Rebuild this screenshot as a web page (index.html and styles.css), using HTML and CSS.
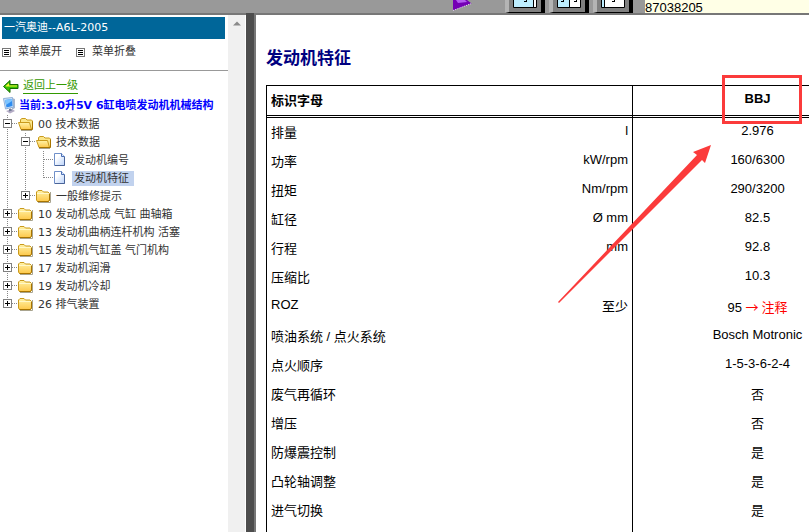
FILE: index.html
```html
<!DOCTYPE html>
<html lang="zh-CN">
<head>
    <meta charset="UTF-8">
    <meta name="viewport" content="width=device-width, initial-scale=1.0">
    <title>一汽奥迪--A6L-2005</title>
    <link rel="stylesheet" href="styles.css">
</head>
<body>

<!-- shared icons -->
<svg class="sprite" aria-hidden="true">
    <defs>
        <linearGradient id="gold" x1="0" y1="0" x2="0" y2="1">
            <stop offset="0" stop-color="#fff3a8"/>
            <stop offset="1" stop-color="#fdc84a"/>
        </linearGradient>
        <linearGradient id="paper" x1="0" y1="0" x2="1" y2="1">
            <stop offset="0.3" stop-color="#ffffff"/>
            <stop offset="1" stop-color="#b9d2fa"/>
        </linearGradient>
    </defs>
    <symbol id="plus" viewBox="0 0 18 18">
        <path d="M7.5 0V18M12 8.500H18" stroke="#888" stroke-dasharray="1 1"/>
        <rect x="3.500" y="4.500" width="8" height="8" fill="#fff" stroke="#808080"/>
        <path d="M5 8.500H10M7.500 6V11" stroke="#000"/>
    </symbol>
    <symbol id="plus-last" viewBox="0 0 18 18">
        <path d="M7.500 0V5M12 8.500H18" stroke="#888" stroke-dasharray="1 1"/>
        <rect x="3.500" y="4.500" width="8" height="8" fill="#fff" stroke="#808080"/>
        <path d="M5 8.500H10M7.500 6V11" stroke="#000"/>
    </symbol>
    <symbol id="minus" viewBox="0 0 18 18">
        <path d="M7.500 0V18M12 8.500H18" stroke="#888" stroke-dasharray="1 1"/>
        <rect x="3.500" y="4.500" width="8" height="8" fill="#fff" stroke="#808080"/>
        <path d="M5 8.500H10" stroke="#000"/>
    </symbol>
    <symbol id="line" viewBox="0 0 18 18">
        <path d="M7.500 0V18" stroke="#888" stroke-dasharray="1 1"/>
    </symbol>
    <symbol id="join" viewBox="0 0 18 18">
        <path d="M7.500 0V18M8 8.500H18" stroke="#888" stroke-dasharray="1 1"/>
    </symbol>
    <symbol id="corner" viewBox="0 0 18 18">
        <path d="M7.500 0V9M8 8.500H18" stroke="#888" stroke-dasharray="1 1"/>
    </symbol>
    <symbol id="folder" viewBox="0 0 18 18">
        <path d="M2 15.500H14.500V5" fill="none" stroke="#a9a48f"/>
        <path d="M.5 13V5L2 3.500H6L7.500 5H12L13.500 6.500V13L12.500 14.500H1.500Z" fill="url(#gold)" stroke="#c99a1c"/>
        <path d="M1 6.500H13" stroke="#fff8c8"/>
        <path d="M1.500 14.500H12.500L13.500 13V7" fill="none" stroke="#a87400"/>
    </symbol>
    <symbol id="folder-open" viewBox="0 0 18 18">
        <path d="M3 15.500H14" stroke="#a9a48f"/>
        <path d="M2.500 13V4.500L4 3.500H7.500L9 5H13.500L14.500 6V14H3.500Z" fill="#fbe68a" stroke="#c99a1c"/>
        <path d="M.5 7.500H11.500L13.500 14.500H3Z" fill="url(#gold)" stroke="#c99a1c"/>
        <path d="M3 14.500H14.500V6.500" fill="none" stroke="#a87400"/>
    </symbol>
    <symbol id="page" viewBox="0 0 18 18">
        <path d="M.5 2.500H7.500L10.500 5.500V14.500H.5Z" fill="url(#paper)" stroke="#6f8fc9"/>
        <path d="M7.500 2.500V5.500H10.500" fill="#dce8fc" stroke="#4a6fb5"/>
        <path d="M1 14.500H10.500V6" fill="none" stroke="#4a6498"/>
    </symbol>
    <symbol id="list" viewBox="0 0 9 9">
        <rect x=".5" y=".5" width="8" height="8" fill="#fff" stroke="#777"/>
        <path d="M2 2.500H7M2 4.500H7M2 6.500H7" stroke="#000"/>
    </symbol>
</svg>

<header class="toolbar">
    <button type="button" class="play" aria-label="播放">
        <svg width="19" height="13" viewBox="0 0 19 13">
            <path d="M0 0H14L18.500 3.500L0 10.500Z" fill="#7400b4"/>
            <path d="M3 0H12L14 2L5 3Z" fill="#b55cf0"/>
            <path d="M0 10.500L18.500 3.500" stroke="#f1e4f8" stroke-dasharray="1 1"/>
        </svg>
    </button>
    <div class="views">
        <button type="button" class="view" aria-label="左宽视图">
            <svg width="25" height="8" viewBox="0 0 25 8">
                <path d="M.5 0V7.500H23.500V0" fill="#fff" stroke="#000"/>
                <path d="M1 0H20V7H1Z" fill="#bdeeff"/>
                <path d="M20.500 0V7M11 1.500H14M13.500 0V2" stroke="#000"/>
            </svg>
        </button>
        <button type="button" class="view" aria-label="均分视图">
            <svg width="25" height="8" viewBox="0 0 25 8">
                <path d="M.5 0V7.500H23.500V0" fill="#fff" stroke="#000"/>
                <path d="M1 0H12V7H1Z" fill="#bdeeff"/>
                <path d="M12.500 0V7M4 1.500H7M6.500 0V2M17 1.500H20M19.500 0V2" stroke="#000"/>
            </svg>
        </button>
        <button type="button" class="view" aria-label="右宽视图">
            <svg width="25" height="8" viewBox="0 0 25 8">
                <path d="M.5 0V7.500H23.500V0" fill="#fff" stroke="#000"/>
                <path d="M1 0H3V7H1Z" fill="#bdeeff"/>
                <path d="M3.500 0V7M11 1.500H14M13.500 0V2" stroke="#000"/>
            </svg>
        </button>
    </div>
    <input type="text" class="number" value="87038205" aria-label="编号">
</header>

<div class="frames">
    <aside class="sidebar">
        <nav class="menu">
            <h2 class="car">一汽奥迪--A6L-2005</h2>
            <div class="menu-actions">
                <button type="button" class="action"><svg width="9" height="9"><use href="#list"/></svg>菜单展开</button>
                <button type="button" class="action"><svg width="9" height="9"><use href="#list"/></svg>菜单折叠</button>
            </div>
            <div class="back">
                <svg width="16" height="13" viewBox="0 0 16 13">
                    <path d="M.5 6.500L7 .5V4.500H15V8.500H7V12.500Z" fill="#35c400" stroke="#176b00"/>
                    <path d="M2.500 6L6 3V5.500H14V6.500H3Z" fill="#f6f03a"/>
                </svg>
                <a href="#">返回上一级</a>
            </div>
            <div class="current">
                <svg width="14" height="18" viewBox="0 0 14 18">
                    <path d="M3 14L9 12L12 14L7 16.500Z" fill="#b3abc4"/>
                    <path d="M9 1L12 2V11L9 13Z" fill="#a9b6cc"/>
                    <path d="M.5 1.500L9.500 .5L10.500 10L2.500 12Z" fill="#cfe3f8" stroke="#8fb0d8"/>
                    <path d="M2 3L9 2L9.500 9L3.500 10.500Z" fill="#2e8cf0"/>
                    <path d="M2 3L9 2L9 4L3 8Z" fill="#7cc4ff"/>
                    <path d="M6 12L8 11.500L9 13.500L6 14.500Z" fill="#6f7a94"/>
                </svg>
                <strong>当前:3.0升5V 6缸电喷发动机机械结构</strong>
            </div>
            <ul class="tree">
                <li>
                    <div class="node">
                        <button type="button" class="toggle" aria-label="折叠"><svg><use href="#minus"/></svg></button>
                        <svg><use href="#folder-open"/></svg>
                        <a href="#">00 技术数据</a>
                    </div>
                    <ul>
                        <li>
                            <div class="node">
                                <svg><use href="#line"/></svg>
                                <button type="button" class="toggle" aria-label="折叠"><svg><use href="#minus"/></svg></button>
                                <svg><use href="#folder-open"/></svg>
                                <a href="#">技术数据</a>
                            </div>
                            <ul>
                                <li class="node">
                                    <svg><use href="#line"/></svg>
                                    <svg><use href="#line"/></svg>
                                    <svg><use href="#join"/></svg>
                                    <svg><use href="#page"/></svg>
                                    <a href="#">发动机编号</a>
                                </li>
                                <li class="node">
                                    <svg><use href="#line"/></svg>
                                    <svg><use href="#line"/></svg>
                                    <svg><use href="#corner"/></svg>
                                    <svg><use href="#page"/></svg>
                                    <a href="#" class="selected">发动机特征</a>
                                </li>
                            </ul>
                        </li>
                        <li class="node">
                            <svg><use href="#line"/></svg>
                            <button type="button" class="toggle" aria-label="展开"><svg><use href="#plus-last"/></svg></button>
                            <svg><use href="#folder"/></svg>
                            <a href="#">一般维修提示</a>
                        </li>
                    </ul>
                </li>
                <li class="node">
                    <button type="button" class="toggle" aria-label="展开"><svg><use href="#plus"/></svg></button>
                    <svg><use href="#folder"/></svg>
                    <a href="#">10 发动机总成 气缸 曲轴箱</a>
                </li>
                <li class="node">
                    <button type="button" class="toggle" aria-label="展开"><svg><use href="#plus"/></svg></button>
                    <svg><use href="#folder"/></svg>
                    <a href="#">13 发动机曲柄连杆机构 活塞</a>
                </li>
                <li class="node">
                    <button type="button" class="toggle" aria-label="展开"><svg><use href="#plus"/></svg></button>
                    <svg><use href="#folder"/></svg>
                    <a href="#">15 发动机气缸盖 气门机构</a>
                </li>
                <li class="node">
                    <button type="button" class="toggle" aria-label="展开"><svg><use href="#plus"/></svg></button>
                    <svg><use href="#folder"/></svg>
                    <a href="#">17 发动机润滑</a>
                </li>
                <li class="node">
                    <button type="button" class="toggle" aria-label="展开"><svg><use href="#plus"/></svg></button>
                    <svg><use href="#folder"/></svg>
                    <a href="#">19 发动机冷却</a>
                </li>
                <li class="node">
                    <button type="button" class="toggle" aria-label="展开"><svg><use href="#plus-last"/></svg></button>
                    <svg><use href="#folder"/></svg>
                    <a href="#">26 排气装置</a>
                </li>
            </ul>
        </nav>
        <div class="scrollbar">
            <button type="button" class="scroll-up" aria-label="向上滚动">
                <svg width="8" height="5" viewBox="0 0 8 5"><path d="M0 4.500L4 .5L8 4.500Z" fill="#8a8a8a"/></svg>
            </button>
        </div>
    </aside>

    <main class="content">
        <h1>发动机特征</h1>
        <div class="table-wrap">
            <table class="specs">
                <colgroup>
                    <col class="col-name">
                    <col class="col-unit">
                    <col>
                </colgroup>
                <thead>
                    <tr><th class="name" colspan="2">标识字母</th><th class="value latin">BBJ</th></tr>
                </thead>
                <tbody>
                    <tr><td class="name">排量</td><td class="unit latin">l</td><td class="value latin">2.976</td></tr>
                    <tr><td class="name">功率</td><td class="unit latin">kW/rpm</td><td class="value latin">160/6300</td></tr>
                    <tr><td class="name">扭矩</td><td class="unit latin">Nm/rpm</td><td class="value latin">290/3200</td></tr>
                    <tr><td class="name">缸径</td><td class="unit latin">Ø mm</td><td class="value latin">82.5</td></tr>
                    <tr><td class="name">行程</td><td class="unit latin">mm</td><td class="value latin">92.8</td></tr>
                    <tr><td class="name">压缩比</td><td class="unit"></td><td class="value latin">10.3</td></tr>
                    <tr><td class="name latin">ROZ</td><td class="unit">至少</td><td class="value">95 <a href="#">→ 注释</a></td></tr>
                    <tr><td class="name">喷油系统 / 点火系统</td><td class="unit"></td><td class="value latin">Bosch Motronic</td></tr>
                    <tr><td class="name">点火顺序</td><td class="unit"></td><td class="value latin">1-5-3-6-2-4</td></tr>
                    <tr><td class="name">废气再循环</td><td class="unit"></td><td class="value">否</td></tr>
                    <tr><td class="name">增压</td><td class="unit"></td><td class="value">否</td></tr>
                    <tr><td class="name">防爆震控制</td><td class="unit"></td><td class="value">是</td></tr>
                    <tr><td class="name">凸轮轴调整</td><td class="unit"></td><td class="value">是</td></tr>
                    <tr><td class="name">进气切换</td><td class="unit"></td><td class="value">是</td></tr>
                    <tr><td class="name"></td><td class="unit"></td><td class="value"></td></tr>
                </tbody>
            </table>
            <!-- red frame and arrow on the engine code -->
            <svg class="mark" width="245" height="230" viewBox="0 0 245 230" aria-hidden="true">
                <rect x="165.500" y="1.500" width="77" height="46" fill="none" stroke="#fb3b3b" stroke-width="3"/>
                <path d="M153 70L135 77L139 80L0 227L1 228L144 85L147 88Z" fill="#fb3b3b"/>
            </svg>
        </div>
    </main>
</div>

</body>
</html>
```
FILE: styles.css
```css
* {
    box-sizing: border-box;
}
body {
    margin: 0;
    height: 100vh;
    display: flex;
    flex-direction: column;
    overflow: hidden;
    background: #fff;
    font-family: "Liberation Sans", "Noto Sans CJK SC", sans-serif;
    font-size: 13px;
    color: #000;
}
button {
    padding: 0;
    border: none;
    background: none;
    font: inherit;
    color: inherit;
    cursor: pointer;
}
svg {
    display: block;
    flex: none;
}
.sprite {
    position: absolute;
    width: 0;
    height: 0;
}

/* toolbar */
.toolbar {
    display: flex;
    flex: none;
    height: 13px;
    padding-left: 453px;
    background: #999;
}
.views {
    display: flex;
    gap: 4px;
    margin: 0 12px 0 33px;
}
.view {
    display: flex;
    width: 40px;
    padding-left: 4px;
    background: #808080;
    border-left: 4px solid #b4b4b4;
    border-right: 4px solid #000;
    border-bottom: 1px solid #000;
}
.number {
    flex: 1;
    min-width: 0;
    padding: 2px 0 0;
    border: none;
    background: #ffffe6;
    font-family: "Liberation Sans", sans-serif;
    font-size: 13px;
    line-height: 11px;
}

/* frames */
.frames {
    display: flex;
    flex: 1;
    min-height: 0;
    background: #4d4d4d;
}
.sidebar {
    display: flex;
    flex: none;
    width: 246px;
    margin-right: 8px;
    padding-right: 1px;
    background: #fff;
    border-top: 2px solid #777;
    font-family: "DejaVu Sans", "Noto Sans CJK SC", sans-serif;
    font-size: 11px;
    line-height: 18px;
    color: #333;
}
.menu {
    flex: 1;
    min-width: 0;
    padding-top: 2px;
    white-space: nowrap;
}
.car {
    margin: 0 3px 0 2px;
    padding: 0 2px;
    background: #069;
    color: #fff;
    font-size: 11px;
    font-weight: normal;
    line-height: 22px;
}
.menu-actions {
    display: flex;
    gap: 14px;
    height: 32px;
    padding: 4px 2px 0;
    border-bottom: 1px solid #999;
}
.action {
    display: flex;
    align-items: center;
    gap: 7px;
    height: 18px;
}
.back {
    display: flex;
    align-items: center;
    gap: 4px;
    margin: 8px 0 3px;
    padding-left: 3px;
}
.back a {
    color: #390;
    text-decoration: none;
    border-bottom: 1px solid #390;
    line-height: 14px;
}
.current {
    display: flex;
    align-items: center;
    gap: 2px;
    padding-left: 3px;
    color: #00f;
}
.tree,
.tree ul {
    margin: 0;
    padding: 0;
    list-style: none;
}
.node {
    display: flex;
    align-items: center;
    height: 18px;
}
.node svg {
    width: 18px;
    height: 18px;
}
.node a {
    padding: 0 2px;
    line-height: 15px;
    color: #333;
    text-decoration: none;
}
.node .selected {
    padding-right: 5px;
    background: #c1d2ee;
}
.scrollbar {
    width: 17px;
    background: #f0f0f0;
}
.scroll-up {
    display: flex;
    align-items: center;
    justify-content: center;
    width: 17px;
    height: 17px;
}

/* content */
.content {
    flex: 1;
    min-width: 0;
    overflow: hidden;
    padding: 30px 10px 0;
    background: #fff;
    border-top: 2px solid #777;
    border-left: 2px solid #777;
}
.content h1 {
    margin: 0 0 13px;
    font-size: 17px;
    line-height: 27px;
    color: #000080;
}
.table-wrap {
    position: relative;
    min-width: 616px;
}
.specs {
    width: 100%;
    table-layout: fixed;
    border-collapse: separate;
    border-spacing: 0;
    border-top: 1px solid #000;
    border-left: 1px solid #000;
}
.col-name {
    width: 260px;
}
.col-unit {
    width: 105px;
}
.specs th,
.specs td {
    height: 29px;
    padding: 5px 4px 4px;
    line-height: 20px;
    vertical-align: top;
    text-align: left;
}
.specs th {
    height: 32px;
    border-bottom: 3px double #000;
}
.specs .latin {
    line-height: 16px;
}
.specs .unit {
    text-align: right;
}
.specs .value {
    text-align: center;
    border-left: 1px solid #000;
}
.specs a {
    color: #f00;
    font-family: "Noto Sans CJK SC", sans-serif;
    text-decoration: none;
}
.mark {
    position: absolute;
    top: -10px;
    left: 292px;
}
```
